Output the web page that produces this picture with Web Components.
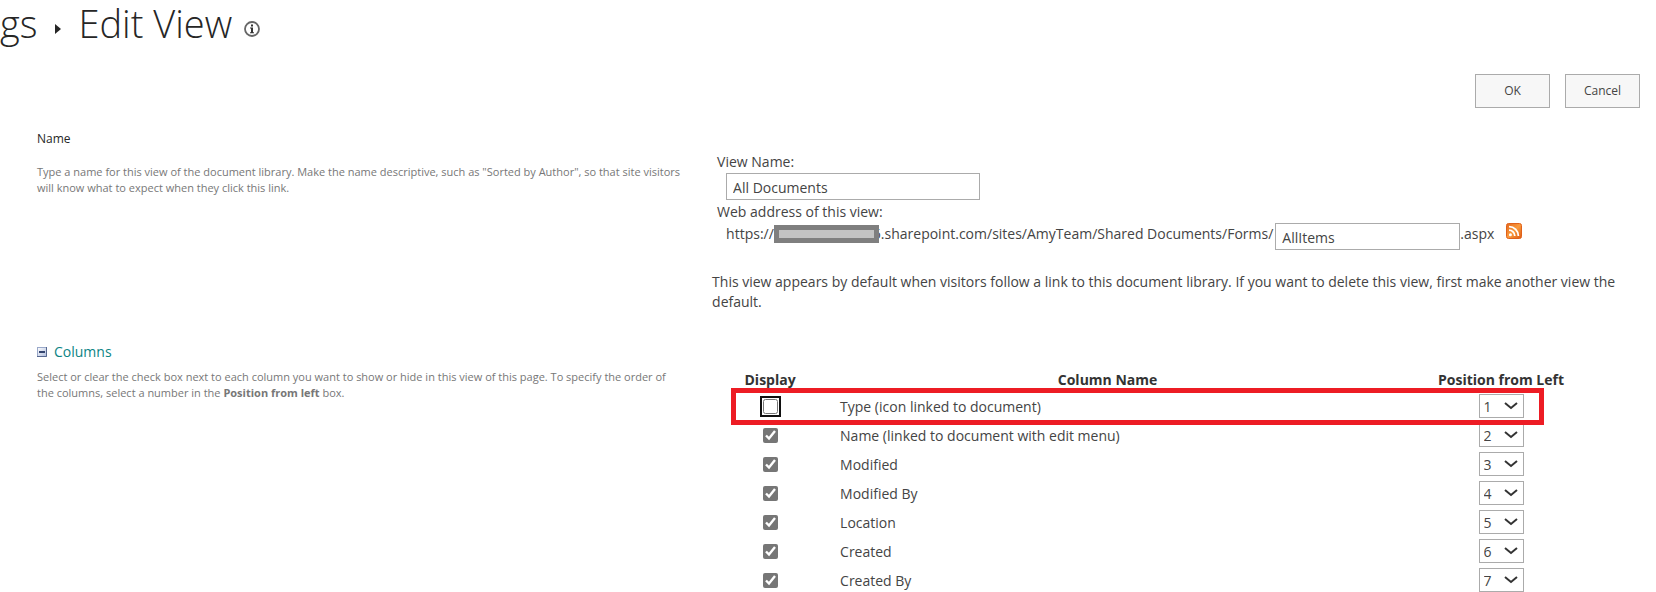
<!DOCTYPE html>
<html lang="en">
<head>
<meta charset="utf-8">
<meta name="viewport" content="width=device-width, initial-scale=1">
<title>Edit View</title>
<style>
    body {
        margin: 0;
        background: #fff;
        color: #444;
        font: 14px/20px "Open Sans", "Noto Sans", sans-serif;
    }
</style>
</head>
<body>
<edit-view-page>
    <page-title slot="title" parent="gs">Edit View</page-title>

    <form-section heading="Name">
        <span slot="description">Type a name for this view of the document library. Make the name descriptive, such as "Sorted by Author", so that site visitors will know what to expect when they click this link.</span>
        <view-name-form name="All Documents" file="AllItems"></view-name-form>
    </form-section>

    <form-section heading="Columns" collapsible>
        <span slot="description">Select or clear the check box next to each column you want to show or hide in this view of this page. To specify the order of the columns, select a number in the <b>Position from left</b> box.</span>
        <column-table></column-table>
    </form-section>
</edit-view-page>

<script>
class EditViewPage extends HTMLElement {
  constructor() {
    super();
    this.attachShadow({ mode: 'open' });
  }

  connectedCallback() {
    this.shadowRoot.innerHTML = `
      <style>
        :host { display: block; }
        .toolbar {
            display: flex;
            justify-content: flex-end;
            gap: 15px;
            padding: 28px 16px 21px;
        }
        button {
            width: 75px;
            height: 34px;
            padding: 0;
            border: 1px solid #ababab;
            background: #f7f7f7;
            color: #444;
            font: inherit;
            font-size: 12px;
        }
        button:hover { background: #e6f2fa; border-color: #92c0e0; }
        main { display: grid; gap: 30px; }
      </style>
      <slot name="title"></slot>
      <div class="toolbar">
          <button type="button">OK</button>
          <button type="button">Cancel</button>
      </div>
      <main><slot></slot></main>
    `;
  }
}

class PageTitle extends HTMLElement {
  constructor() {
    super();
    this.attachShadow({ mode: 'open' });
  }

  connectedCallback() {
    const parent = this.getAttribute('parent');

    this.shadowRoot.innerHTML = `
      <style>
        :host { display: block; }
        h1 {
            display: flex;
            align-items: center;
            margin: 0;
            color: #262626;
            font-size: 38px;
            font-weight: 300;
            line-height: 46px;
        }
        svg { flex: none; }
        .arrow { margin: 12px 17px 0 18px; }
        .info { margin: 12px 0 0 12px; }
      </style>
      <h1>
          <span>${parent}</span>
          <svg class="arrow" width="6" height="12" viewBox="0 0 6 12" aria-hidden="true">
              <path d="M0 1l6 5-6 5z" fill="#262626"/>
          </svg>
          <slot></slot>
          <svg class="info" width="16" height="16" viewBox="0 0 16 16" role="img" aria-label="Information">
              <circle cx="8" cy="8" r="7" fill="none" stroke="#666" stroke-width="1.8"/>
              <path d="M7 3.4h2v2H7zM6 6.4h3v4.8h1v1H6v-1h1V7.4H6z" fill="#333"/>
          </svg>
      </h1>
    `;
  }
}

class FormSection extends HTMLElement {
  constructor() {
    super();
    this.attachShadow({ mode: 'open' });
  }

  connectedCallback() {
    const heading = this.getAttribute('heading');
    const collapsible = this.hasAttribute('collapsible');

    this.shadowRoot.innerHTML = `
      <style>
        :host {
            display: grid;
            grid-template-columns: 43% 1fr;
        }
        .intro { padding: 0 30px 0 37px; }
        h2 {
            display: flex;
            align-items: center;
            margin: 0;
            color: #262626;
            font-size: 12px;
            font-weight: 400;
            line-height: 20px;
        }
        h2 a {
            display: flex;
            align-items: center;
            gap: 7px;
            color: #0b8484;
            font-size: 14px;
            text-decoration: none;
        }
        h2 a:hover span { text-decoration: underline; }
        p {
            margin: 15px 0 0;
            color: #777;
            font-size: 11px;
            line-height: 16px;
        }
        .collapsible p { margin-top: 7px; }
        .body { padding-top: 23px; }
        .collapsible + .body { padding-top: 28px; }
      </style>
      <div class="intro ${collapsible ? 'collapsible' : ''}">
          <h2>${collapsible ? this.toggle(heading) : heading}</h2>
          <p><slot name="description"></slot></p>
      </div>
      <div class="body"><slot></slot></div>
    `;
  }

  toggle(heading) {
    return `
      <a href="#columns">
          <svg width="10" height="10" viewBox="0 0 10 10" aria-hidden="true">
              <defs>
                  <linearGradient id="face" x1="0" y1="0" x2="1" y2="1">
                      <stop offset="0" stop-color="#fff"/>
                      <stop offset="1" stop-color="#aebcdc"/>
                  </linearGradient>
              </defs>
              <rect x="0.5" y="0.5" width="9" height="9" fill="url(#face)" stroke="#9aa9ca"/>
              <path d="M0 9.5h9.5V0" fill="none" stroke="#56678f"/>
              <path d="M2 5h6" stroke="#34456f" stroke-width="2"/>
          </svg>
          <span>${heading}</span>
      </a>`;
  }
}

class ViewNameForm extends HTMLElement {
  constructor() {
    super();
    this.attachShadow({ mode: 'open' });
  }

  connectedCallback() {
    const name = this.getAttribute('name');
    const file = this.getAttribute('file');

    this.shadowRoot.innerHTML = `
      <style>
        :host { display: block; }
        label { display: block; padding-left: 5px; }
        input {
            box-sizing: border-box;
            height: 27px;
            padding: 2px 6px 0;
            border: 1px solid #ababab;
            background: #fff;
            color: #444;
            font: inherit;
        }
        #view-name { display: block; width: 254px; margin: 1px 0 2px 14px; }
        #file-name { width: 185px; margin-left: 2px; }
        .address {
            display: flex;
            align-items: flex-start;
            margin: 1px 0 0 14px;
            line-height: 22px;
            white-space: nowrap;
        }
        .redacted {
            position: relative;
            z-index: 1;
            box-sizing: border-box;
            width: 105px;
            height: 18px;
            margin: 2px -6px 0 0;
            border: 5px solid #7f7f7f;
            background: #c3c3c3;
        }
        .feed { display: flex; margin-left: 12px; }
        p { margin: 22px 36px 0 0; }
      </style>
      <label for="view-name">View Name:</label>
      <input id="view-name" type="text" value="${name}">
      <label for="file-name">Web address of this view:</label>
      <div class="address">
          <span>https://</span>
          <span class="redacted"></span>
          <span>6.sharepoint.com/sites/AmyTeam/Shared Documents/Forms/</span>
          <input id="file-name" type="text" value="${file}">
          <span>.aspx</span>
          <a class="feed" href="#feed" aria-label="RSS feed">
              <svg width="16" height="16" viewBox="0 0 16 16">
                  <defs>
                      <linearGradient id="feed" x1="0" y1="0" x2="1" y2="1">
                          <stop offset="0" stop-color="#e2661c"/>
                          <stop offset="0.5" stop-color="#fa9a3c"/>
                          <stop offset="1" stop-color="#dc5a14"/>
                      </linearGradient>
                  </defs>
                  <rect x="0.5" y="0.5" width="15" height="15" rx="2" fill="url(#feed)" stroke="#e0611a"/>
                  <circle cx="4.4" cy="11.8" r="1.5" fill="#fff"/>
                  <path d="M3 7.2a5.8 5.8 0 0 1 5.8 5.8M3 3.6A9.4 9.4 0 0 1 12.4 13" fill="none" stroke="#fff" stroke-width="1.8"/>
              </svg>
          </a>
      </div>
      <p>This view appears by default when visitors follow a link to this document library. If you want to delete this view, first make another view the default.</p>
    `;
  }
}

class ColumnTable extends HTMLElement {
  constructor() {
    super();
    this.attachShadow({ mode: 'open' });
    this.columns = [
        { name: 'Type (icon linked to document)', display: false, marked: true },
        { name: 'Name (linked to document with edit menu)', display: true },
        { name: 'Modified', display: true },
        { name: 'Modified By', display: true },
        { name: 'Location', display: true },
        { name: 'Created', display: true },
        { name: 'Created By', display: true },
    ];
  }

  connectedCallback() {
    this.shadowRoot.innerHTML = `
      <style>
        :host { display: block; margin-right: 41px; }
        table {
            width: 100%;
            table-layout: fixed;
            border-collapse: collapse;
        }
        .display { width: 116px; }
        .position { width: 228px; }
        th {
            padding: 0;
            color: #333;
            font-weight: 700;
            line-height: 19px;
            white-space: nowrap;
        }
        td { padding: 5px 0 0; text-align: center; line-height: 24px; }
        td.name { padding: 7px 0 0 12px; text-align: left; line-height: 22px; }
        tr { position: relative; }
        input {
            display: block;
            width: 15px;
            height: 15px;
            margin: 0 auto;
            accent-color: #767676;
        }
        .marked input {
            outline: 2px solid #101010;
            outline-offset: 1px;
            border-radius: 3px;
        }
        .select {
            display: inline-grid;
            align-items: center;
            vertical-align: top;
        }
        .select > * { grid-area: 1 / 1; }
        select {
            appearance: none;
            box-sizing: border-box;
            width: 45px;
            height: 24px;
            padding: 0 4px;
            border: 1px solid #ababab;
            border-radius: 0;
            background: #fff;
            color: #444;
            font: inherit;
        }
        .select svg { justify-self: end; margin-right: 6px; pointer-events: none; }
        /* frame drawn over the row and a little below it */
        .frame {
            position: absolute;
            inset: -1px 71px -7px 19px;
            z-index: 1;
            border: 5px solid #ed1c24;
            pointer-events: none;
        }
      </style>
      <table>
          <colgroup>
              <col class="display">
              <col>
              <col class="position">
          </colgroup>
          <thead>
              <tr>
                  <th scope="col">Display</th>
                  <th scope="col">Column Name</th>
                  <th scope="col">Position from Left</th>
              </tr>
          </thead>
          <tbody>${this.columns.map((column, i) => this.row(column, i)).join('')}</tbody>
      </table>
    `;
  }

  row({ name, display, marked }, index) {
    const options = this.columns
        .map((_, i) => `<option ${i === index ? 'selected' : ''}>${i + 1}</option>`)
        .join('');

    return `
      <tr class="${marked ? 'marked' : ''}">
          <td><input id="show-${index}" type="checkbox" ${display ? 'checked' : ''}></td>
          <td class="name"><label for="show-${index}">${name}</label></td>
          <td>
              <span class="select">
                  <select aria-label="Position of ${name}">${options}</select>
                  <svg width="14" height="8" viewBox="0 0 14 8" aria-hidden="true">
                      <path d="M1 1l6 5 6-5" fill="none" stroke="#333" stroke-width="2"/>
                  </svg>
              </span>
              ${marked ? '<span class="frame"></span>' : ''}
          </td>
      </tr>`;
  }
}

customElements.define('edit-view-page', EditViewPage);
customElements.define('page-title', PageTitle);
customElements.define('form-section', FormSection);
customElements.define('view-name-form', ViewNameForm);
customElements.define('column-table', ColumnTable);
</script>
</body>
</html>
